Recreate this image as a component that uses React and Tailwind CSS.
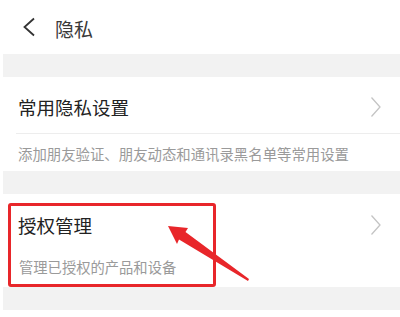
import React from 'react';

const cjk = { fontFamily: '"Noto Sans CJK SC", "Noto Sans", sans-serif' };

const ChevronRight = () => (
  <svg width="12" height="22" viewBox="0 0 12 22" className="shrink-0">
    <path d="M1.5 1.5 L10 11 L1.5 20.5" fill="none" stroke="#c4c4c4" strokeWidth="1.3" />
  </svg>
);

const Band = () => <div className="h-[23px] ml-[3px] bg-[#f2f2f2]" />;

export default function App() {
  return (
    <div className="relative w-[400px] h-[317px] bg-white overflow-hidden" style={cjk}>
      {/* header */}
      <div className="h-[54px] flex items-center">
        <svg width="14" height="20" viewBox="0 0 14 20" className="ml-[22px]">
          <path d="M12 1.5 L2.5 10 L12 18.5" fill="none" stroke="#333" strokeWidth="1.8" />
        </svg>
        <span className="ml-[19px] text-[19px] text-[#3a3a3a] leading-none mt-[2px]">隐私</span>
      </div>
      <Band />

      {/* common privacy settings */}
      <div>
        <div className="h-[56px] flex items-center justify-between pl-[18px] pr-[18px] pt-[4px]">
          <span className="text-[18.5px] text-[#222] leading-none">常用隐私设置</span>
          <ChevronRight />
        </div>
        <div className="h-px ml-[16px] bg-[#ededed]" />
        <div className="h-[37px] flex items-center pl-[18px] pt-[3px]">
          <span className="text-[14.4px] text-[#9a9a9a] leading-none">添加朋友验证、朋友动态和通讯录黑名单等常用设置</span>
        </div>
      </div>
      <Band />

      {/* authorization */}
      <div className="h-[93px] flex flex-col">
        <div className="h-[56px] flex items-center justify-between pl-[18px] pr-[18px] pt-[6px]">
          <span className="text-[18.5px] text-[#222] leading-none">授权管理</span>
          <ChevronRight />
        </div>
        <div className="flex-1 flex items-center pl-[19px] pb-[2px]">
          <span className="text-[14.3px] text-[#9a9a9a] leading-none">管理已授权的产品和设备</span>
        </div>
      </div>
      <Band />

      {/* annotation box */}
      <div className="absolute left-[8px] top-[203px] w-[208px] h-[84px] border-[3px] border-[#e8262a] rounded-[3px]" />

      {/* annotation arrow */}
      <svg className="absolute left-0 top-0" width="400" height="317" viewBox="0 0 400 317">
        <polygon
          points="168,226 188,228 185.5,232 249,279 248,281 179,239.5 177,244"
          fill="#e8262a"
        />
      </svg>
    </div>
  );
}
